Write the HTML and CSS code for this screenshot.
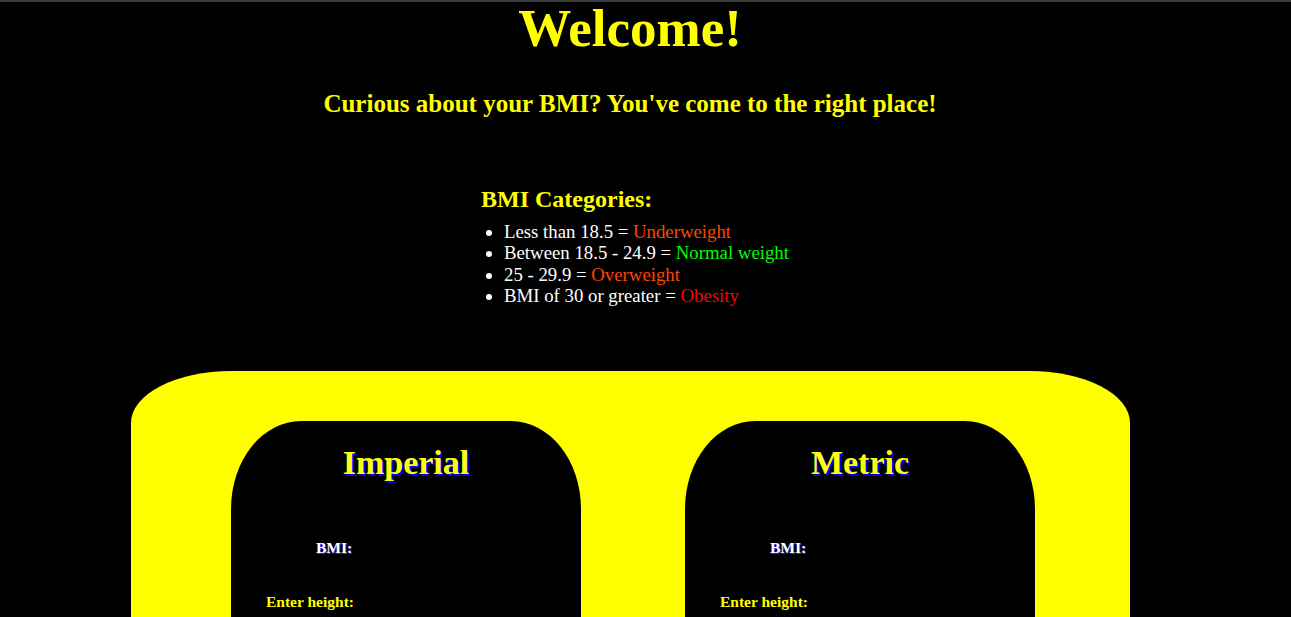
FILE: index.html
```
<!DOCTYPE html>
<html lang="en">
<head>
<meta charset="utf-8">
<title>BMI Calculator</title>
<link rel="stylesheet" href="styles.css">
</head>
<body>
<div class="chrome"></div>
<header class="intro">
  <h1 class="welcome">Welcome!</h1>
  <h2 class="tagline">Curious about your BMI? You've come to the right place!</h2>
</header>
<section class="categories">
  <h3 class="cat-title">BMI Categories:</h3>
  <ul class="cat-list">
    <li>Less than 18.5 = <span class="warn">Underweight</span></li>
    <li>Between 18.5 - 24.9 = <span class="ok">Normal weight</span></li>
    <li>25 - 29.9 = <span class="warn">Overweight</span></li>
    <li>BMI of 30 or greater = <span class="bad">Obesity</span></li>
  </ul>
</section>
<section class="calc">
  <div class="card">
    <h2 class="card-title">Imperial</h2>
    <p class="bmi">BMI:</p>
    <label class="field">Enter height:</label>
  </div>
  <div class="card">
    <h2 class="card-title">Metric</h2>
    <p class="bmi">BMI:</p>
    <label class="field">Enter height:</label>
  </div>
</section>
</body>
</html>
```
FILE: styles.css
```
html, body {
  margin: 0;
  padding: 0;
  background: #000;
  overflow: hidden;
}
body {
  font-family: "Liberation Serif", "Times New Roman", serif;
  color: #fff;
  height: 617px;
}
.chrome {
  height: 2px;
  background: #3c3c3c;
}
.intro {
  margin: 0 39px 0 8px;
  text-align: center;
}
.welcome {
  margin: 0;
  font-size: 53px;
  line-height: 52px;
  color: #ffff00;
  font-weight: bold;
}
.tagline {
  margin: 37px 0 0;
  font-size: 25px;
  line-height: 26px;
  color: #ffff00;
  font-weight: bold;
}
.categories {
  margin: 70px 0 0 481px;
}
.cat-title {
  margin: 0;
  font-size: 24px;
  line-height: 24px;
  color: #ffff00;
  font-weight: bold;
}
.cat-list {
  margin: 10px 0 0;
  padding-left: 23px;
  font-size: 18.8px;
  line-height: 21.3px;
  color: #fff;
}
.warn { color: #ff4500; }
.ok { color: #00ff00; }
.bad { color: #ff0000; }
.calc {
  margin: 65px 0 0 131px;
  width: 999px;
  height: 600px;
  box-sizing: border-box;
  padding: 50px 0 0 100px;
  background: #ffff00;
  border-radius: 100px 100px 0 0 / 52px 52px 0 0;
  display: flex;
  gap: 104px;
  align-items: flex-start;
}
.card {
  width: 350px;
  height: 450px;
  flex: none;
  box-sizing: border-box;
  padding-top: 25px;
  background: #000;
  border-radius: 70px 70px 0 0 / 88px 88px 0 0;
}
.card-title {
  margin: 0;
  text-align: center;
  font-size: 34px;
  line-height: 34px;
  color: #ffff00;
  font-weight: bold;
  text-shadow: 2px 2px 0 #0000ff;
}
.bmi {
  margin: 59px 0 0 85px;
  font-size: 15.5px;
  line-height: 18px;
  font-weight: bold;
  color: #fff;
  text-shadow: 1px 1px 0 #3030ff;
}
.field {
  display: block;
  margin: 36px 0 0 35px;
  font-size: 15.5px;
  line-height: 18px;
  font-weight: bold;
  color: #ffff00;
}
```
